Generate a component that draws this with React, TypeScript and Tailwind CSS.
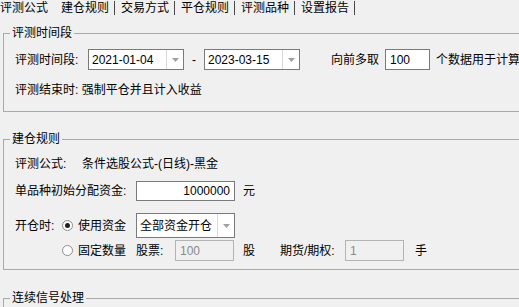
import type { ReactNode } from "react";

const tabs = ["评测公式", "建仓规则", "交易方式", "平仓规则", "评测品种", "设置报告"];

function Arrow() {
  return (
    <svg width="7" height="4" viewBox="0 0 7 4" className="shrink-0">
      <path d="M0 0h7L3.5 4z" fill="#a0a0a0" />
    </svg>
  );
}

function Combo({ value, width, height = 21 }: { value: string; width: number; height?: number }) {
  return (
    <div
      className="flex shrink-0 border border-[#7a7a7a] bg-white"
      style={{ width, height }}
    >
      <div className="flex flex-1 items-center overflow-hidden whitespace-nowrap pl-[3px]">{value}</div>
      <div className="flex w-[17px] items-center justify-center border-l border-[#d9d9d9]">
        <Arrow />
      </div>
    </div>
  );
}

function Field({
  value,
  width,
  height = 21,
  right,
  disabled,
}: {
  value: string;
  width: number;
  height?: number;
  right?: boolean;
  disabled?: boolean;
}) {
  return (
    <div
      className={`flex shrink-0 items-center border px-[4px] ${right ? "justify-end" : ""} ${
        disabled ? "border-[#b4b4b4] bg-[#f0f0f0] text-[#8a8a8a]" : "border-[#7a7a7a] bg-white"
      }`}
      style={{ width, height }}
    >
      {value}
    </div>
  );
}

function Radio({ checked }: { checked?: boolean }) {
  return (
    <span className="flex h-[11px] w-[11px] shrink-0 items-center justify-center rounded-full border border-[#8c8c8c] bg-white">
      {checked && <span className="h-[5px] w-[5px] rounded-full bg-[#222]" />}
    </span>
  );
}

function Group({ title, className, children }: { title: string; className?: string; children?: ReactNode }) {
  return (
    <fieldset className={`ml-[3px] w-[560px] border border-[#a9a9a9] ${className ?? ""}`}>
      <legend className="ml-[6px] px-[2px] leading-[14px]">{title}</legend>
      {children}
    </fieldset>
  );
}

export default function App() {
  return (
    <div
      className="h-[307px] w-[519px] overflow-hidden bg-[#f0f0f0] text-[12px] leading-[16px] text-black"
      style={{ fontFamily: '"Liberation Sans", "Noto Sans CJK SC", sans-serif' }}
    >
      {/* tab strip */}
      <div className="flex h-[16px] items-center whitespace-nowrap">
        <span className="w-[49px]">{tabs[0]}</span>
        <span className="ml-[12px] w-[48px]">{tabs[1]}</span>
        {tabs.slice(2).map((t) => (
          <div key={t} className="flex items-center">
            <span className="ml-[5px] h-[14px] w-px bg-[#4a4a4a]" />
            <span className="ml-[6px] w-[48px]">{t}</span>
          </div>
        ))}
        <span className="ml-[5px] h-[14px] w-px bg-[#4a4a4a]" />
      </div>

      <Group title="评测时间段" className="mt-[10px]">
        <div className="px-[11px] pb-[13px] pt-[9px]">
          <div className="flex h-[21px] items-center whitespace-nowrap">
            <span className="w-[73px]">评测时间段:</span>
            <Combo value="2021-01-04" width={96} />
            <span className="w-[20px] text-center">-</span>
            <Combo value="2023-03-15" width={96} />
            <span className="ml-[31px]">向前多取</span>
            <span className="ml-[6px]">
              <Field value="100" width={45} />
            </span>
            <span className="ml-[6px]">个数据用于计算</span>
          </div>
          <div className="mt-[12px] h-[16px] whitespace-nowrap">评测结束时: 强制平仓并且计入收益</div>
        </div>
      </Group>

      <Group title="建仓规则" className="mt-[20px]">
        <div className="px-[11px] pb-[8px] pt-[10px]">
          <div className="flex h-[16px] items-center whitespace-nowrap">
            <span className="w-[67px]">评测公式:</span>
            <span>条件选股公式-(日线)-黑金</span>
          </div>
          <div className="mt-[9px] flex h-[20px] items-center whitespace-nowrap">
            <span className="w-[121px]">单品种初始分配资金:</span>
            <Field value="1000000" width={99} height={20} right />
            <span className="ml-[8px]">元</span>
          </div>
          <div className="mt-[12px] flex h-[25px] items-center whitespace-nowrap">
            <span className="w-[47px]">开仓时:</span>
            <div className="flex w-[74px] items-center">
              <Radio checked />
              <span className="ml-[5px]">使用资金</span>
            </div>
            <Combo value="全部资金开仓" width={99} height={25} />
          </div>
          <div className="mt-[2px] flex h-[21px] items-center whitespace-nowrap">
            <span className="w-[47px]" />
            <div className="flex w-[74px] items-center">
              <Radio />
              <span className="ml-[5px]">固定数量</span>
            </div>
            <span className="w-[39px]">股票:</span>
            <Field value="100" width={59} disabled />
            <span className="ml-[9px] w-[37px]">股</span>
            <span className="w-[65px]">期货/期权:</span>
            <Field value="1" width={59} disabled />
            <span className="ml-[11px]">手</span>
          </div>
        </div>
      </Group>

      <Group title="连续信号处理" className="mt-[21px]">
        <div className="h-[40px]" />
      </Group>
    </div>
  );
}
